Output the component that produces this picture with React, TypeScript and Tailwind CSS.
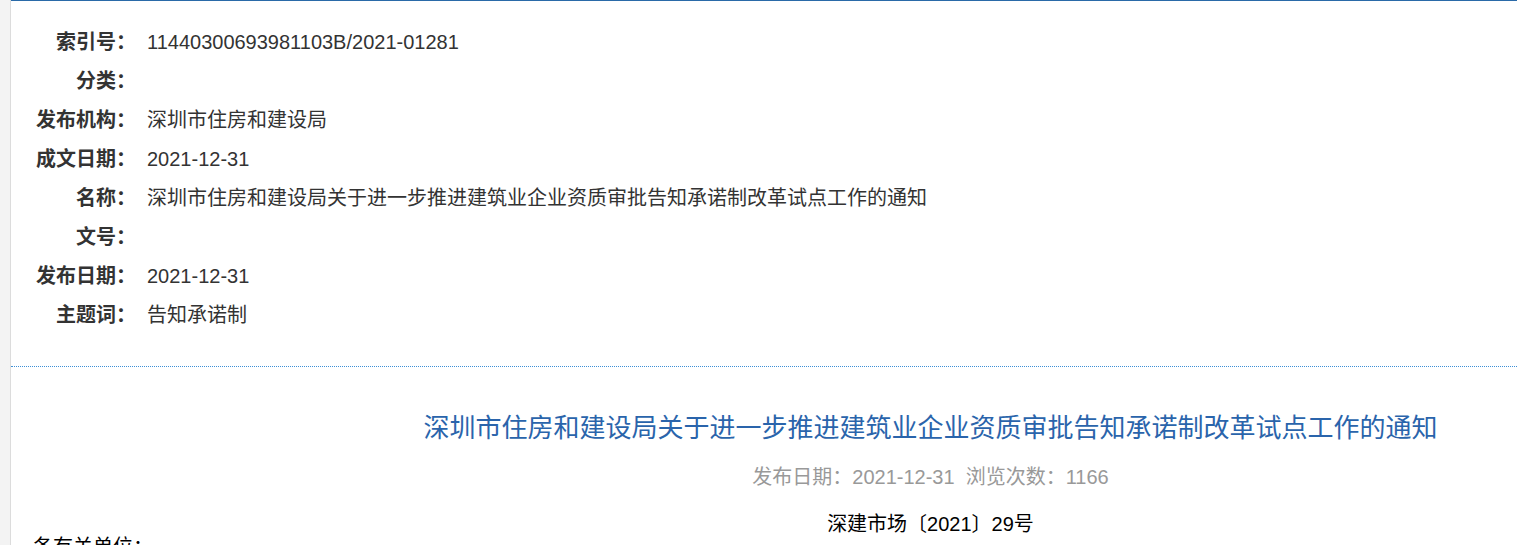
import React from "react";

const rows: [string, string][] = [
  ["索引号：", "11440300693981103B/2021-01281"],
  ["分类：", ""],
  ["发布机构：", "深圳市住房和建设局"],
  ["成文日期：", "2021-12-31"],
  ["名称：", "深圳市住房和建设局关于进一步推进建筑业企业资质审批告知承诺制改革试点工作的通知"],
  ["文号：", ""],
  ["发布日期：", "2021-12-31"],
  ["主题词：", "告知承诺制"],
];

export default function App() {
  return (
    <div
      className="flex min-h-[545px] w-full bg-white"
      style={{ fontFamily: '"Liberation Sans", Arial, "Noto Sans CJK SC", sans-serif' }}
    >
      <div className="w-[11px] shrink-0 bg-[#f3f3f3] border-r border-[#dcdcdc]" />
      <div className="flex-1 border-t border-[#2a6aa8] overflow-hidden">
        <div className="pt-[22px] pb-[31px]">
          {rows.map(([k, v]) => (
            <div key={k} className="flex h-[39px] items-center text-[20px] leading-[39px] text-[#333]">
              <div className="w-[125px] shrink-0 text-right font-bold">{k}</div>
              <div className="ml-[11px]">{v}</div>
            </div>
          ))}
        </div>
        <div className="h-0 border-b border-dotted border-[#3d8fd6]" />
        <div className="ml-[333px] pt-[41px] text-center">
          <h1 className="text-[26px] leading-[40px] font-normal text-[#2a64ab]">
            深圳市住房和建设局关于进一步推进建筑业企业资质审批告知承诺制改革试点工作的通知
          </h1>
          <div className="mt-[15px] text-[20px] leading-[28px] text-[#999]">
            发布日期：2021-12-31&nbsp;&nbsp;浏览次数：1166
          </div>
          <div className="mt-[21px] text-[20px] leading-[24px] text-black">深建市场〔2021〕29号</div>
        </div>
        <div className="pl-[22px] text-[20px] leading-[22px] text-black">各有关单位：</div>
      </div>
    </div>
  );
}
